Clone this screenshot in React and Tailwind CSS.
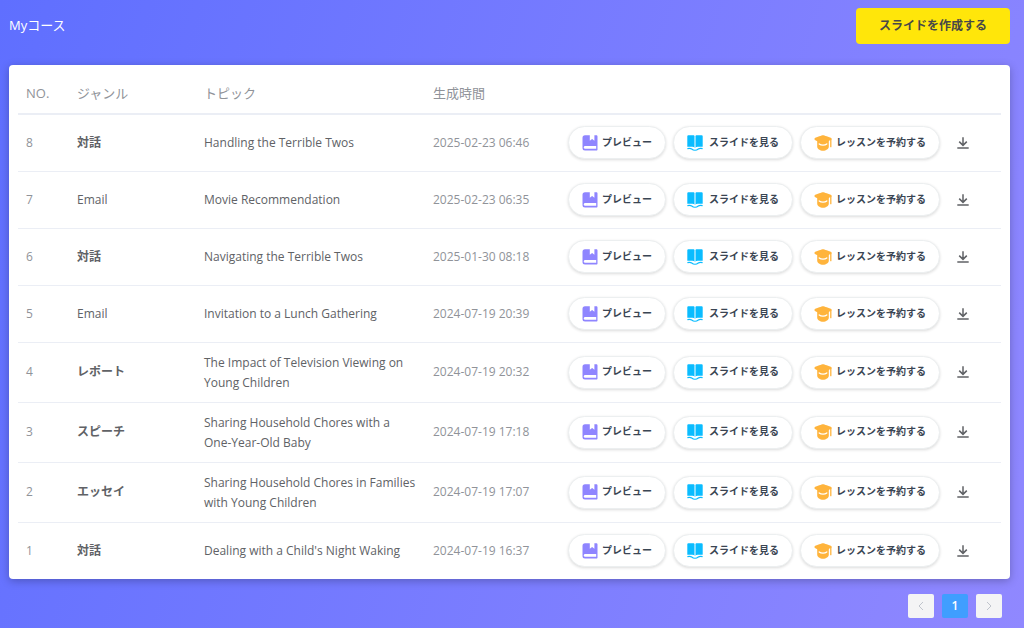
import clsx from "clsx";

const COURSES = [
  { no: 8, genre: "対話", topic: "Handling the Terrible Twos", createdAt: "2025-02-23 06:46" },
  { no: 7, genre: "Email", topic: "Movie Recommendation", createdAt: "2025-02-23 06:35" },
  { no: 6, genre: "対話", topic: "Navigating the Terrible Twos", createdAt: "2025-01-30 08:18" },
  { no: 5, genre: "Email", topic: "Invitation to a Lunch Gathering", createdAt: "2024-07-19 20:39" },
  { no: 4, genre: "レポート", topic: "The Impact of Television Viewing on Young Children", createdAt: "2024-07-19 20:32" },
  { no: 3, genre: "スピーチ", topic: "Sharing Household Chores with a One-Year-Old Baby", createdAt: "2024-07-19 17:18" },
  { no: 2, genre: "エッセイ", topic: "Sharing Household Chores in Families with Young Children", createdAt: "2024-07-19 17:07" },
  { no: 1, genre: "対話", topic: "Dealing with a Child's Night Waking", createdAt: "2024-07-19 16:37" },
];

function BookmarkIcon() {
  return (
    <svg className="size-4 shrink-0" viewBox="0 0 16 16" fill="#8f85ff" aria-hidden="true">
      <path d="M3 .3h4.800v5.400l2.300-1.600 2.300 1.600V.3h1.800c.8 0 1.300.5 1.300 1.300v12.900c0 .6-.4 1-1 1H3A2.500 2.500 0 0 1 .5 13V2.800A2.500 2.500 0 0 1 3 .3Z" />
      <path d="M3.200 11h11v2.800h-11a1.400 1.400 0 0 1 0-2.800Z" fill="#fff" />
    </svg>
  );
}

function SlidesIcon() {
  return (
    <svg className="size-4 shrink-0" viewBox="0 0 16 16" fill="#0abcff" aria-hidden="true">
      <path d="M.3 1.200C.3.600.700.300 1.300.300h4.900c.800 0 1.400.400 1.400 1.100v11.100c-.600-.600-1.400-.700-2.200-.700H.300ZM15.700 1.200c0-.600-.400-.900-1-.900H9.800c-.800 0-1.400.400-1.400 1.100v11.100c.600-.600 1.400-.700 2.200-.700h5.100Z" />
      <path d="M7.500 1.500h1v11h-1Z" fill="#9be3ff" />
      <path d="M.4 13.600c1.900-.5 3.300-.4 4.300.4 1.800 1.500 4.800 1.500 6.600 0 1-.8 2.400-.9 4.300-.4" fill="none" stroke="#0abcff" strokeWidth="1.200" />
    </svg>
  );
}

function GraduationIcon() {
  return (
    <svg className="h-4 w-[18px] shrink-0" viewBox="0 0 18 16" fill="#ffb43c" aria-hidden="true">
      <path d="M9 .3c.9 0 6.500 1.900 8 2.700.8.500.8 1.400 0 1.900C15.200 6 10.500 7.900 9 7.900S2.800 6 1 4.900c-.8-.5-.8-1.400 0-1.900C2.500 2.200 8.100.3 9 .3Z" />
      <path d="M3.200 5h11.600v6.700c0 2.100-2.800 4-5.800 4s-5.800-1.900-5.800-4Z" />
      <path d="M5.200 8.900c2 1.700 5.600 1.700 7.600 0" fill="none" stroke="#fff" strokeWidth="1.300" strokeLinecap="round" />
      <path d="M15.600 5.500v6" fill="none" stroke="#fff" strokeWidth=".8" />
      <path d="M16.800 4v7.700" fill="none" stroke="#ffb43c" strokeWidth="1.300" strokeLinecap="round" />
    </svg>
  );
}

function DownloadIcon() {
  return (
    <svg className="size-3" viewBox="0 0 12 12" fill="none" stroke="#606266" strokeWidth="1.500" aria-hidden="true">
      <path d="M6 .2v8M2.200 4.600 6 8.400l3.800-3.800M.3 11h11.400" />
    </svg>
  );
}

function ChevronIcon({ d }) {
  return (
    <svg className="size-3" viewBox="0 0 12 12" fill="none" stroke="#c0c4cc" aria-hidden="true">
      <path d={d} />
    </svg>
  );
}

function PillButton({ icon, children }) {
  return (
    <button
      type="button"
      className="flex h-[33px] items-center gap-1 rounded-full border border-[#eceff0] bg-white px-[13px] text-[10px] font-bold whitespace-nowrap text-[#3a4553] shadow-[0_1px_3px_rgba(0,0,0,0.14)] hover:bg-gray-50"
    >
      {icon}
      {children}
    </button>
  );
}

function CourseRow({ course }) {
  return (
    <tr className="h-[57px] border-b border-[#ebeef5] last:border-b-0">
      <td className="px-2 text-[#909399]">{course.no}</td>
      <td className={clsx("px-2", course.genre !== "Email" && "font-bold")}>{course.genre}</td>
      <td className="px-2 pt-[10px] pb-[9px] leading-5">{course.topic}</td>
      <td className="px-2 text-[#909399]">{course.createdAt}</td>
      <td className="px-2">
        <div className="flex items-center gap-[7px]">
          <PillButton icon={<BookmarkIcon />}>プレビュー</PillButton>
          <PillButton icon={<SlidesIcon />}>
            <span className="pl-0.5">スライドを見る</span>
          </PillButton>
          <PillButton icon={<GraduationIcon />}>レッスンを予約する</PillButton>
          <button type="button" aria-label="ダウンロード" className="ml-2 p-0.5">
            <DownloadIcon />
          </button>
        </div>
      </td>
    </tr>
  );
}

export default function App() {
  return (
    <div className="min-h-screen bg-[linear-gradient(108deg,#5f6fff,#9088ff)] pt-2 pr-[14px] pb-2 pl-[9px] font-['Open_Sans','Noto_Sans_CJK_JP',sans-serif]">
      <header className="flex h-9 items-center justify-between">
        <h1 className="text-[13px] text-white">Myコース</h1>
        <button
          type="button"
          className="h-9 rounded bg-[#ffe60a] px-[23px] text-xs font-bold text-[#484848] hover:bg-[#ffee55]"
        >
          スライドを作成する
        </button>
      </header>

      <main className="mt-[21px] rounded bg-white px-[9px] shadow-[0_2px_8px_rgba(0,0,0,0.25)]">
        <table className="w-full table-fixed border-collapse text-left text-xs text-[#606266]">
          <thead>
            <tr className="h-[49px] border-b-2 border-[#ebeef5] text-[13px] text-[#909399]">
              <th className="w-[51px] px-2 pt-[10px] font-normal">NO.</th>
              <th className="w-[127px] px-2 pt-[10px] font-normal">ジャンル</th>
              <th className="px-2 pt-[10px] font-normal">トピック</th>
              <th className="w-[135px] px-2 pt-[10px] font-normal">生成時間</th>
              <th className="w-[441px]" aria-label="操作" />
            </tr>
          </thead>
          <tbody>
            {COURSES.map((course) => (
              <CourseRow key={course.no} course={course} />
            ))}
          </tbody>
        </table>
      </main>

      <nav aria-label="ページ" className="mt-[15px] mr-2 flex justify-end gap-2 text-xs">
        <button type="button" disabled aria-label="前へ" className="flex h-6 w-[26px] items-center justify-center rounded-xs bg-[#f4f4f5]">
          <ChevronIcon d="M8 2 4 6l4 4" />
        </button>
        <button type="button" aria-current="page" className="h-6 w-[26px] rounded-xs bg-[#409eff] font-semibold text-white">
          1
        </button>
        <button type="button" disabled aria-label="次へ" className="flex h-6 w-[26px] items-center justify-center rounded-xs bg-[#f4f4f5]">
          <ChevronIcon d="M4 2l4 4-4 4" />
        </button>
      </nav>
    </div>
  );
}
